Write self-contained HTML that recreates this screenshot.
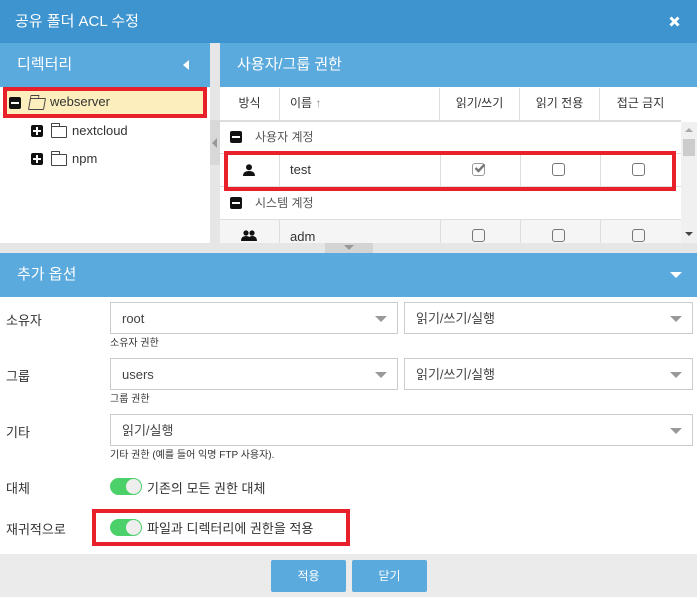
<!DOCTYPE html>
<html><head><meta charset="utf-8"><style>
*{margin:0;padding:0;box-sizing:border-box}
body{width:697px;height:597px;overflow:hidden;background:#fff;font-family:"Liberation Sans","Noto Sans CJK KR",sans-serif;color:#333;position:relative;font-size:13px}
.a{position:absolute}
.hdr{background:#5aaade;color:#fff;font-size:15px}
.sel{position:absolute;border:1px solid #ccc;background:#fff;height:32px;font-size:13px;line-height:32px;padding-left:11px;color:#444}
.sel:after{content:"";position:absolute;right:10px;top:13px;border-left:6px solid transparent;border-right:6px solid transparent;border-top:6px solid #999}
.hint{position:absolute;font-size:10px;color:#333}
.lbl{position:absolute;left:6px;font-size:13px}
.tg{position:absolute;width:32px;height:17px;border-radius:9px;background:#4cd06a}
.tg:after{content:"";position:absolute;right:1px;top:1px;width:15px;height:15px;border-radius:50%;background:#eee}
.cb{position:absolute;width:13px;height:13px;border:1.5px solid #777;border-radius:3px}
.red{position:absolute;border:4px solid #e8202a}
.sq{position:absolute;width:12px;height:12px;background:#111;border-radius:2px}
.sq:before{content:"";position:absolute;left:2px;top:5px;width:8px;height:2px;background:#fff}
.plus:after{content:"";position:absolute;left:5px;top:2px;width:2px;height:8px;background:#fff}
.fold{position:absolute;width:16px;height:12px;border:1.3px solid #444;border-radius:1px}
.fold:before{content:"";position:absolute;left:-1.3px;top:-4px;width:7px;height:3px;border:1.3px solid #444;border-bottom:none;border-radius:1px 1px 0 0}
.th{position:absolute;top:88px;height:32px;line-height:30px;text-align:center;border-right:1px solid #ddd;font-size:12px;color:#333}
.btn{position:absolute;top:560px;width:75px;height:32px;background:#5aaade;color:#fff;text-align:center;line-height:32px;border-radius:2px;font-size:12px}
</style></head><body>
<div class="a" style="left:0;top:0;width:697px;height:43px;background:#3d94cf;color:#fff;font-size:15px;line-height:43px;padding-left:15px">공유 폴더 ACL 수정</div>
<svg class="a" style="left:669px;top:16px" width="11" height="11"><path d="M1.5 1.5 L9.5 9.5 M9.5 1.5 L1.5 9.5" stroke="#fff" stroke-width="3"/></svg>
<div class="a hdr" style="left:0;top:43px;width:210px;height:44px;line-height:44px;padding-left:17px">디렉터리</div>
<div class="a" style="left:183px;top:60px;border-top:5px solid transparent;border-bottom:5px solid transparent;border-right:6px solid #fff"></div>
<div class="a hdr" style="left:220px;top:43px;width:477px;height:44px;line-height:44px;padding-left:17px">사용자/그룹 권한</div>
<div class="a" style="left:210px;top:43px;width:10px;height:200px;background:#e6e6e6"></div>
<div class="a" style="left:210px;top:120px;width:10px;height:45px;background:#d8d8d8"></div>
<div class="a" style="left:212px;top:138px;border-top:5px solid transparent;border-bottom:5px solid transparent;border-right:5px solid #999"></div>
<!-- tree -->
<div class="a" style="left:3px;top:87px;width:204px;height:31px;background:#fdefbd"></div>
<div class="red" style="left:3px;top:87px;width:204px;height:31px"></div>
<div class="sq" style="left:9px;top:97px"></div>
<div class="fold" style="left:29px;top:98px;transform:skewX(-10deg)"></div>
<div class="a" style="left:50px;top:94px;font-size:13px">webserver</div>
<div class="sq plus" style="left:31px;top:125px"></div>
<div class="fold" style="left:51px;top:126px"></div>
<div class="a" style="left:72px;top:123px;font-size:13px">nextcloud</div>
<div class="sq plus" style="left:31px;top:153px"></div>
<div class="fold" style="left:51px;top:154px"></div>
<div class="a" style="left:72px;top:151px;font-size:13px">npm</div>
<!-- table -->
<div class="a" style="left:220px;top:120px;width:461px;height:2px;background:#ddd"></div>
<div class="th" style="left:220px;width:60px">방식</div>
<div class="th" style="left:280px;width:160px;text-align:left;padding-left:10px">이름 <span style="color:#888">↑</span></div>
<div class="th" style="left:440px;width:80px">읽기/쓰기</div>
<div class="th" style="left:520px;width:80px">읽기 전용</div>
<div class="th" style="left:600px;width:81px;border:none">접근 금지</div>
<div class="sq" style="left:230px;top:131px"></div>
<div class="a" style="left:255px;top:128px;font-size:12px;color:#555">사용자 계정</div>
<div class="a" style="left:220px;top:153px;width:461px;height:34px;border-top:1px solid #ddd;border-bottom:1px solid #ddd"></div>
<div class="a" style="left:279px;top:153px;width:1px;height:34px;background:#ddd"></div>
<div class="a" style="left:440px;top:153px;width:1px;height:34px;background:#ddd"></div>
<div class="a" style="left:520px;top:153px;width:1px;height:34px;background:#ddd"></div>
<div class="a" style="left:600px;top:153px;width:1px;height:34px;background:#ddd"></div>
<svg class="a" style="left:243px;top:164px" width="12" height="12"><circle cx="6" cy="3.2" r="3" fill="#111"/><path d="M0 12 Q0 7 6 7 Q12 7 12 12Z" fill="#111"/></svg>
<div class="a" style="left:290px;top:162px;font-size:13px">test</div>
<div class="cb" style="left:472px;top:163px;border-color:#999"></div>
<svg class="a" style="left:474px;top:163px" width="12" height="10"><path d="M1.5 5 L4.5 8 L10.5 1.5" stroke="#777" stroke-width="2.4" fill="none"/></svg>
<div class="cb" style="left:552px;top:163px"></div>
<div class="cb" style="left:632px;top:163px"></div>
<div class="red" style="left:224px;top:151px;width:452px;height:40px"></div>
<div class="sq" style="left:230px;top:197px"></div>
<div class="a" style="left:255px;top:194px;font-size:12px;color:#555">시스템 계정</div>
<div class="a" style="left:220px;top:219px;width:461px;height:24px;background:#f5f5f5;border-top:1px solid #ddd"></div>
<div class="a" style="left:279px;top:219px;width:1px;height:24px;background:#ddd"></div>
<div class="a" style="left:440px;top:219px;width:1px;height:24px;background:#ddd"></div>
<div class="a" style="left:520px;top:219px;width:1px;height:24px;background:#ddd"></div>
<div class="a" style="left:600px;top:219px;width:1px;height:24px;background:#ddd"></div>
<svg class="a" style="left:241px;top:230px" width="16" height="11"><circle cx="5" cy="3" r="2.6" fill="#111"/><circle cx="11" cy="3" r="2.6" fill="#111"/><path d="M0 11 Q0 6 5 6 Q10 6 10 11Z M7 11 Q7 6 11 6 Q16 6 16 11Z" fill="#111"/></svg>
<div class="a" style="left:290px;top:229px;font-size:13px">adm</div>
<div class="cb" style="left:472px;top:229px"></div>
<div class="cb" style="left:552px;top:229px"></div>
<div class="cb" style="left:632px;top:229px"></div>
<div class="a" style="left:681px;top:122px;width:16px;height:121px;background:#f0f0f0"></div>
<div class="a" style="left:683px;top:139px;width:12px;height:17px;background:#ccc"></div>
<div class="a" style="left:685px;top:128px;border-left:4px solid transparent;border-right:4px solid transparent;border-bottom:4px solid #aaa"></div>
<div class="a" style="left:685px;top:232px;border-left:4px solid transparent;border-right:4px solid transparent;border-top:4px solid #444"></div>
<div class="a" style="left:0;top:243px;width:697px;height:10px;background:#e6e6e6"></div>
<div class="a" style="left:325px;top:243px;width:48px;height:10px;background:#d4d4d4"></div>
<div class="a" style="left:344px;top:245px;border-left:5px solid transparent;border-right:5px solid transparent;border-top:5px solid #999"></div>
<!-- options -->
<div class="a hdr" style="left:0;top:253px;width:697px;height:44px;line-height:44px;padding-left:17px">추가 옵션</div>
<div class="a" style="left:670px;top:272px;border-left:6px solid transparent;border-right:6px solid transparent;border-top:6px solid #fff"></div>
<div class="lbl" style="top:310px">소유자</div>
<div class="sel" style="left:110px;top:302px;width:288px">root</div>
<div class="sel" style="left:404px;top:302px;width:289px">읽기/쓰기/실행</div>
<div class="hint" style="left:110px;top:334px">소유자 권한</div>
<div class="lbl" style="top:366px">그룹</div>
<div class="sel" style="left:110px;top:358px;width:288px">users</div>
<div class="sel" style="left:404px;top:358px;width:289px">읽기/쓰기/실행</div>
<div class="hint" style="left:110px;top:390px">그룹 권한</div>
<div class="lbl" style="top:422px">기타</div>
<div class="sel" style="left:110px;top:414px;width:583px">읽기/실행</div>
<div class="hint" style="left:110px;top:446px">기타 권한 (예를 들어 익명 FTP 사용자).</div>
<div class="lbl" style="top:478px">대체</div>
<div class="tg" style="left:110px;top:478px"></div>
<div class="a" style="left:147px;top:478px;font-size:13px">기존의 모든 권한 대체</div>
<div class="lbl" style="top:519px">재귀적으로</div>
<div class="tg" style="left:110px;top:519px"></div>
<div class="a" style="left:147px;top:518px;font-size:13px">파일과 디렉터리에 권한을 적용</div>
<div class="red" style="left:92px;top:509px;width:258px;height:37px"></div>
<div class="a" style="left:0;top:554px;width:697px;height:43px;background:#ebebeb"></div>
<div class="btn" style="left:271px">적용</div>
<div class="btn" style="left:352px">닫기</div>
</body></html>
